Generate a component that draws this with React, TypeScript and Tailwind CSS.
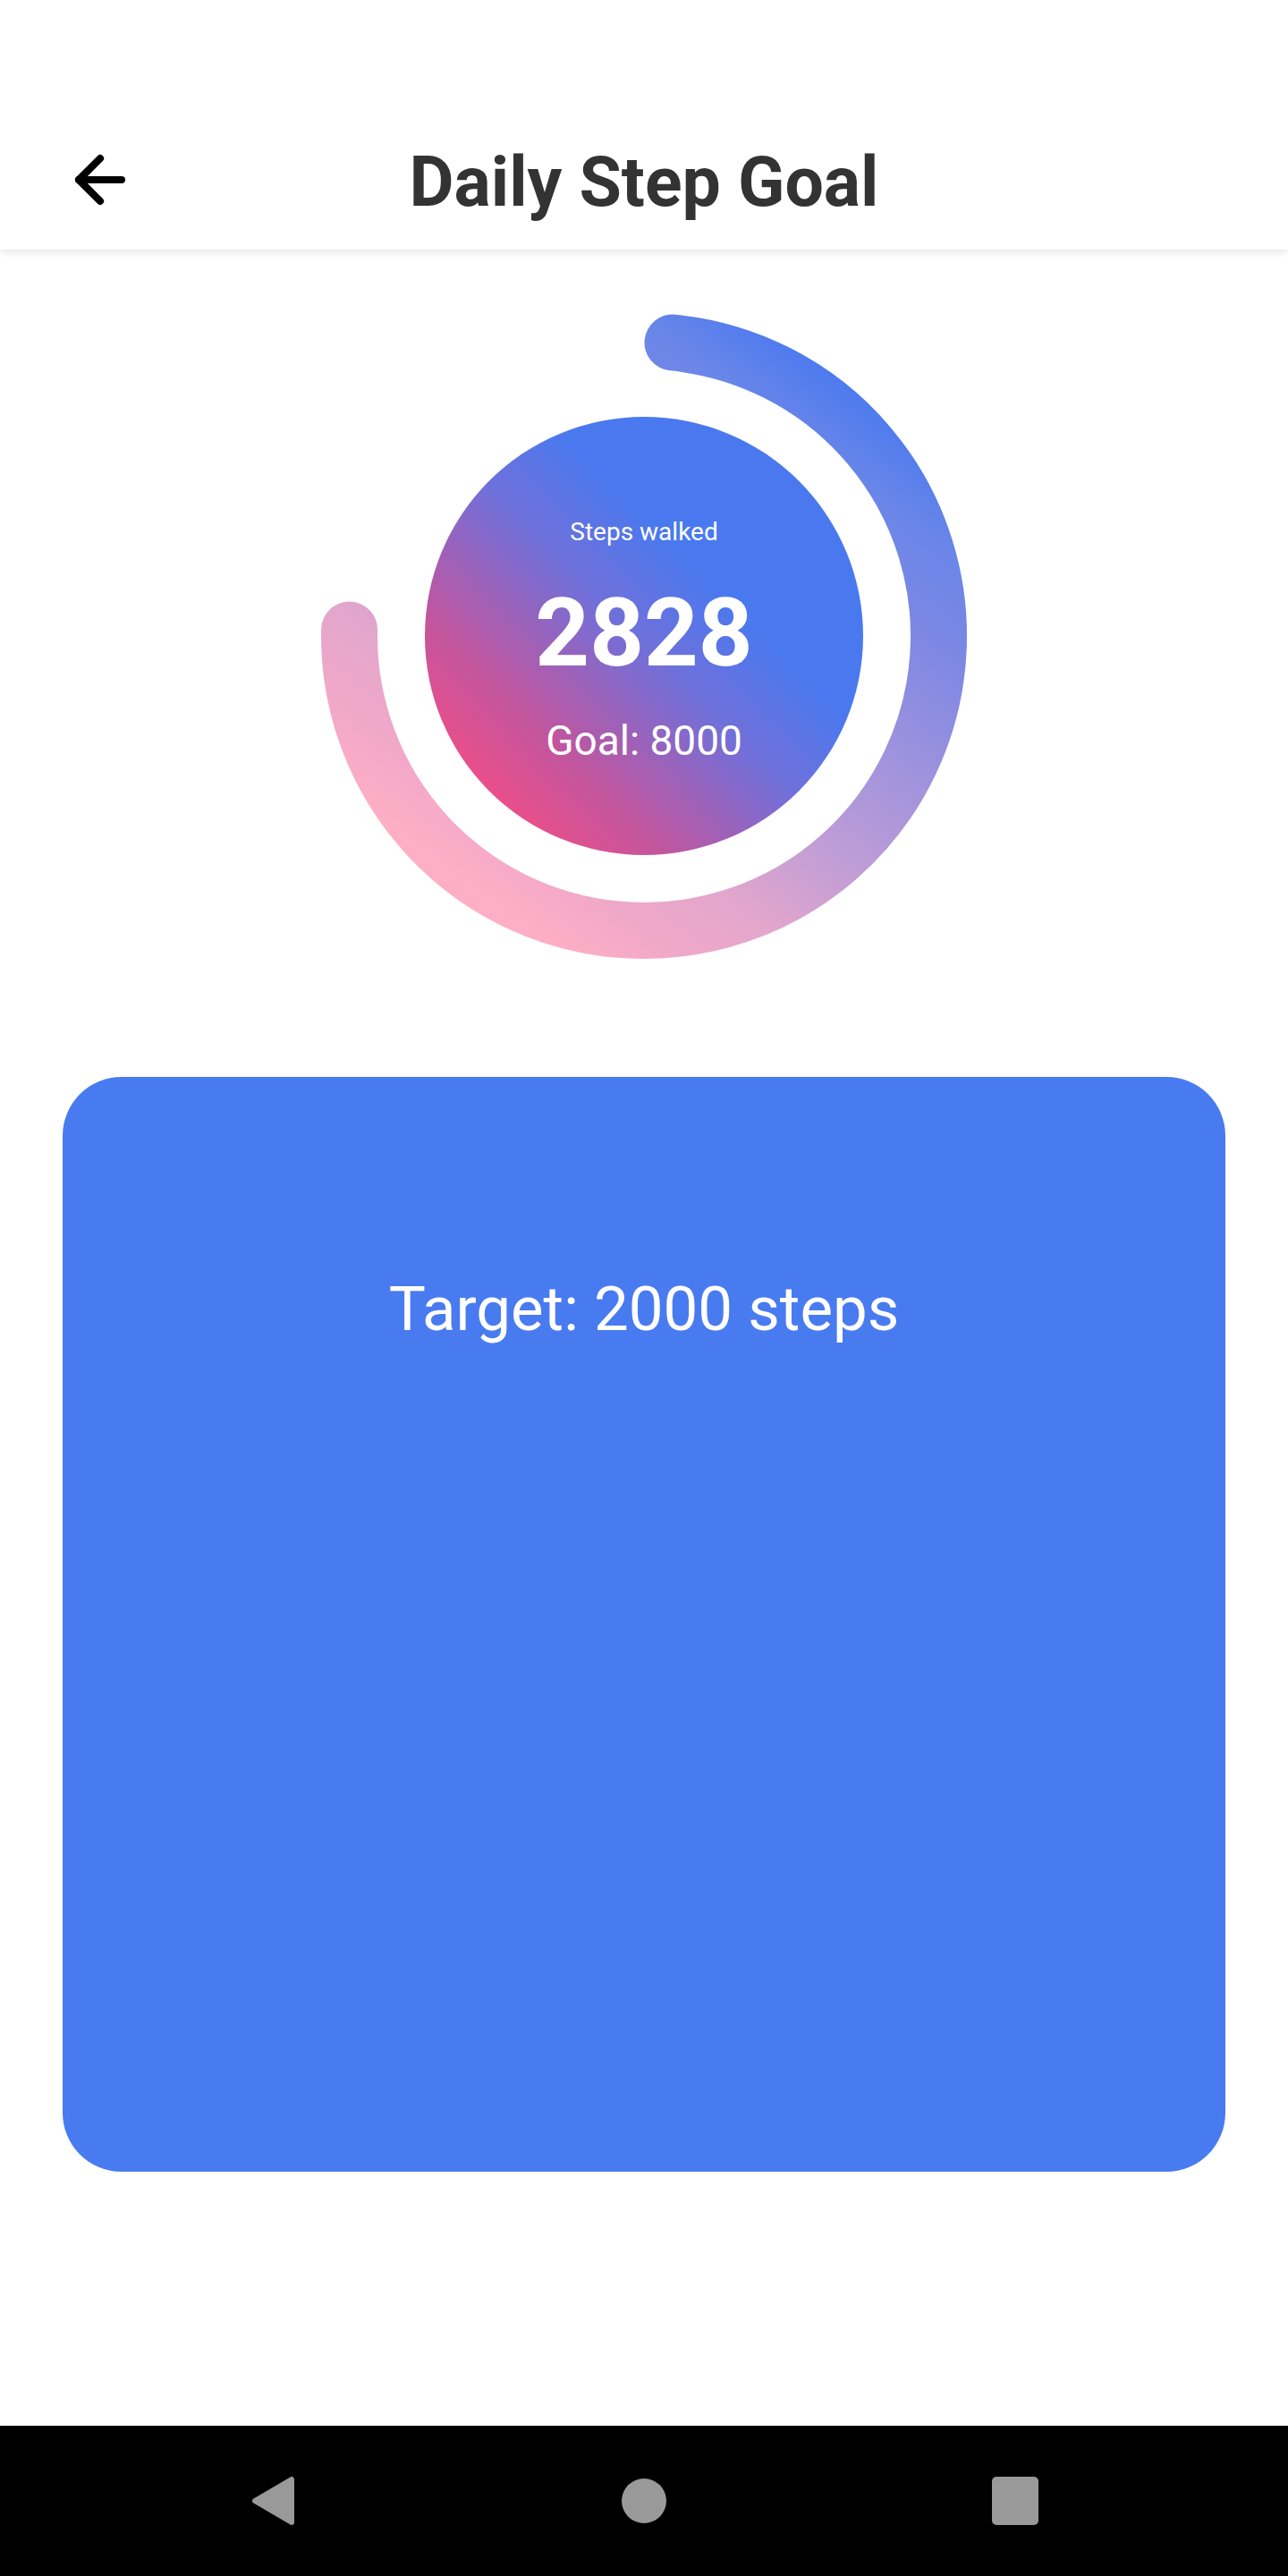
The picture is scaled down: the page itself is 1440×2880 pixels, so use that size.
import { ArrowLeft } from 'lucide-react'

function ProgressRing() {
  return (
    <svg width="740" height="740" viewBox="0 0 740 740" className="col-start-1 row-start-1">
      <defs>
        <linearGradient id="ringGrad" gradientUnits="userSpaceOnUse" x1="673" y1="-34" x2="67" y2="774">
          <stop offset="0" stopColor="#3f77f1" />
          <stop offset="0.148" stopColor="#4f7bee" />
          <stop offset="0.222" stopColor="#6a86e8" />
          <stop offset="0.304" stopColor="#7b87e4" />
          <stop offset="0.569" stopColor="#c09dd6" />
          <stop offset="0.679" stopColor="#e3a6cc" />
          <stop offset="0.761" stopColor="#f0a8c8" />
          <stop offset="0.835" stopColor="#feaec5" />
          <stop offset="1" stopColor="#ffafc5" />
        </linearGradient>
      </defs>
      <path
        d="M 40.6 363 A 329.5 329.5 0 1 0 402 42"
        fill="none"
        stroke="url(#ringGrad)"
        strokeWidth="63"
        strokeLinecap="round"
      />
    </svg>
  )
}

function NavBar() {
  return (
    <nav className="h-[168px] bg-black grid grid-cols-3 items-center">
      <div className="flex justify-end pr-[150px]">
        <svg width="50" height="56" viewBox="0 0 50 56">
          <polygon points="46,4 46,52 5,28" fill="#999999" stroke="#999999" strokeWidth="6" strokeLinejoin="round" />
        </svg>
      </div>
      <div className="flex justify-center">
        <div className="w-[50px] h-[50px] rounded-full bg-[#999999]" />
      </div>
      <div className="flex justify-start pl-[149px]">
        <div className="w-[52px] h-[54px] rounded-[5px] bg-[#999999]" />
      </div>
    </nav>
  )
}

export default function App() {
  return (
    <div className="h-[2880px] bg-white flex flex-col font-['Roboto',sans-serif]">
      <header className="relative z-10 bg-white pt-[139px] pb-[16px] shadow-[0_3px_8px_rgba(0,0,0,0.10)]">
        <div className="h-[124px] grid grid-cols-[1fr_auto_1fr] items-center">
          <div className="pl-[71px] flex">
            <ArrowLeft size={82} strokeWidth={2.4} color="#000000" />
          </div>
          <h1 className="text-[77px] leading-none font-bold text-[#333333] mt-[6px]">Daily Step Goal</h1>
          <div />
        </div>
      </header>

      <main className="flex-1 flex flex-col items-center">
        <div className="mt-[62px] grid place-items-center">
          <ProgressRing />
          <div className="col-start-1 row-start-1 w-[490px] h-[490px] rounded-full bg-[linear-gradient(to_bottom_left,#4a79ef_36%,#7070da_51%,#c0569f_72%,#f24d86_88%)] flex flex-col items-center text-white mb-[1px]">
            <p className="mt-[115px] text-[28px] leading-none">Steps walked</p>
            <p className="mt-[46px] text-[106px] leading-none font-bold">2828</p>
            <p className="mt-[44px] text-[46px] leading-none">Goal: 8000</p>
          </div>
        </div>

        <section className="mt-[123px] w-[1300px] h-[1224px] rounded-[66px] bg-[#497bf0] flex flex-col items-center">
          <p className="mt-[225px] text-[69px] leading-none text-white">Target: 2000 steps</p>
        </section>
      </main>

      <NavBar />
    </div>
  )
}
